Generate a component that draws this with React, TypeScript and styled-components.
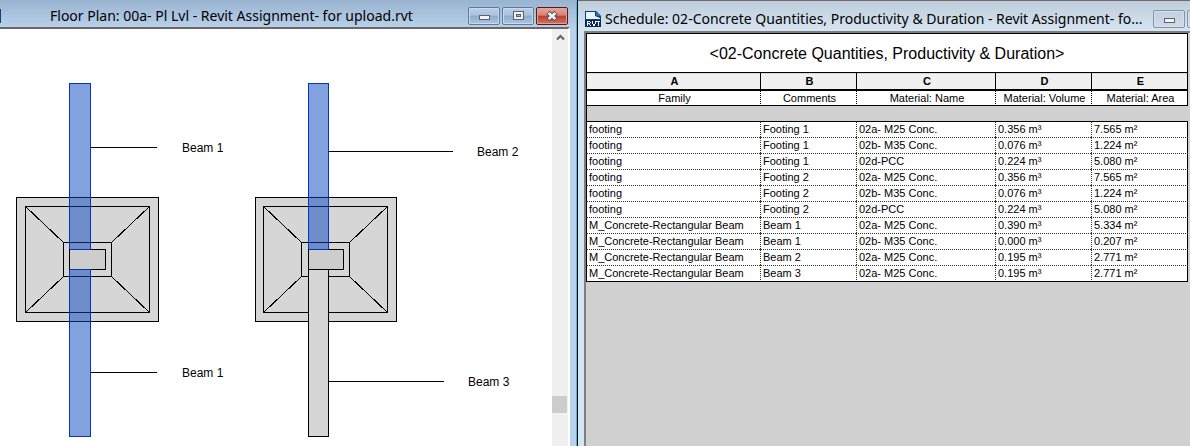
import React from 'react';
import styled, { createGlobalStyle, css } from 'styled-components';

const GlobalStyle = createGlobalStyle`
  *, *::before, *::after { box-sizing: border-box; }
  body { margin: 0; background: #d0d0d0; font-family: "Liberation Sans", Arial, sans-serif; color: #000; }
`;

const Workspace = styled.main`
  display: grid;
  grid-template-columns: minmax(0, 577fr) minmax(0, 613fr);
  min-height: 100vh;
  overflow: hidden;
`;

const PlanWindow = styled.section`
  display: flex;
  flex-direction: column;
  padding-right: 6px;
  border-right: 1px solid #2cc4ee;
  background: linear-gradient(#99b4d1, #b9d1ea 28px, #b9d1ea);
`;

const ScheduleWindow = styled.section`
  display: flex;
  flex-direction: column;
  padding-left: 6px;
  border-left: 1px solid #000;
  border-top: 1px solid #6b6b70;
  background: linear-gradient(#bfcddb, #d7e4f2 30px, #d7e4f2);
`;

const TitleBar = styled.header<{ $kind: 'plan' | 'schedule' }>`
  display: flex;
  align-items: center;
  gap: 4px;
  ${({ $kind }) =>
    $kind === 'plan'
      ? css`height: 27px; padding: 4px 2px 0 0; &::before { content: ""; align-self: center; width: 1px; height: 14px; background: #0a3f8c; margin-right: 45px; }`
      : css`height: 30px; padding: 6px 0 0 1px;`}
`;

const Title = styled.h1`
  flex: 1;
  min-width: 0;
  margin: 0;
  overflow: hidden;
  white-space: nowrap;
  font: 400 14px/22px "Noto Sans", "Open Sans", sans-serif;
`;

const Controls = styled.div<{ $wide?: boolean }>`
  display: flex;
  gap: 2px;
  flex: none;
  width: ${({ $wide }) => ($wide ? '100px' : '37px')};
  overflow: hidden;
`;

const WindowButton = styled.button<{ $tone: 'blue' | 'pale' | 'red' }>`
  display: grid;
  place-items: center;
  flex: none;
  width: 32px;
  height: 18px;
  padding: 0;
  border-radius: 2px;
  ${({ $tone }) =>
    $tone === 'red'
      ? css`border: 1px solid #541b26; background: linear-gradient(#e8a598, #d98374 45%, #b8412a 50%, #d2745f); box-shadow: inset 0 0 0 1px #e6a295;`
      : $tone === 'blue'
        ? css`border: 1px solid #62799b; background: linear-gradient(#b8cfe8, #a9c2de 45%, #8fabca 50%, #abc7e4); box-shadow: inset 0 0 0 1px #c6dbf0;`
        : css`border: 1px solid #8592ab; background: linear-gradient(#c3cfde, #cfdbe9); box-shadow: inset 0 0 0 1px #d5e0ed;`}
`;

const PlanBody = styled.div`
  display: flex;
  flex: 1;
  border-top: 2px solid #6e6769;
  border-right: 2px solid #fff;
  background: #fff;
`;

const Canvas = styled.div`
  flex: 1;
  min-width: 0;
  overflow: hidden;
  background: #fff;
  svg { display: block; }
  text { font: 12px "Liberation Sans", Arial, sans-serif; }
`;

const ScrollBar = styled.div`
  display: flex;
  flex: none;
  flex-direction: column;
  width: 16px;
  background: #f0f0f0;
`;

const ScrollUp = styled.button`
  height: 17px;
  padding: 0;
  border: 0;
  background: transparent;
  svg { display: block; margin: 0 auto; }
`;

const ScrollTrack = styled.div`
  display: flex;
  flex: 1;
  align-items: flex-end;
  padding-bottom: 33px;
`;

const ScrollThumb = styled.div`
  width: 15px;
  height: 17px;
  background: #cdcdcd;
`;

const ScheduleBody = styled.div`
  flex: 1;
  padding-right: 2px;
  border-top: 2px solid #7f7f82;
  border-left: 2px solid #7f7f82;
  background: #d0d0d0;
`;

const Table = styled.table`
  width: 100%;
  table-layout: fixed;
  border-collapse: separate;
  border-spacing: 0;
  font-size: 11px;
  line-height: 13px;
`;

const Caption = styled.caption`
  height: 40px;
  border: 1px solid #000;
  background: #fff;
  font-size: 16px;
  line-height: 39px;
  white-space: nowrap;
`;

const Column = styled.col<{ $width?: number }>`
  width: ${({ $width }) => ($width ? `${$width}px` : 'auto')};
`;

const Letter = styled.th`
  height: 18px;
  padding: 1px 0 0 2px;
  border-left: 1px solid #000;
  border-bottom: 2px solid #000;
  background: #f0f0f0;
  box-shadow: inset 0 1px 0 #d8d8d8;
  &:last-child { border-right: 1px solid #000; }
`;

const Field = styled.th`
  height: 15px;
  padding: 0 0 0 2px;
  border-left: 1px dotted #000;
  border-bottom: 1px solid #000;
  background: #fff;
  font-weight: 400;
  &:first-child { border-left-style: solid; }
  &:last-child { border-right: 1px solid #000; }
`;

const Spacer = styled.td`
  height: 15px;
  padding: 0;
  border-left: 1px solid #000;
`;

const Cell = styled.td`
  height: 16px;
  padding: 1px 0 1px 2px;
  border-left: 1px dotted #333;
  border-top: 1px dotted #333;
  background: #fff;
  white-space: nowrap;
  overflow: hidden;
  &:first-child { border-left: 1px solid #000; }
  &:last-child { border-right: 1px solid #000; }
  tr:first-child > & { border-top: 1px solid #000; }
  tr:last-child > & { border-bottom: 1px solid #000; height: 17px; }
`;

const rows = [
  ['footing', 'Footing 1', '02a- M25 Conc.', '0.356 m³', '7.565 m²'],
  ['footing', 'Footing 1', '02b- M35 Conc.', '0.076 m³', '1.224 m²'],
  ['footing', 'Footing 1', '02d-PCC', '0.224 m³', '5.080 m²'],
  ['footing', 'Footing 2', '02a- M25 Conc.', '0.356 m³', '7.565 m²'],
  ['footing', 'Footing 2', '02b- M35 Conc.', '0.076 m³', '1.224 m²'],
  ['footing', 'Footing 2', '02d-PCC', '0.224 m³', '5.080 m²'],
  ['M_Concrete-Rectangular Beam', 'Beam 1', '02a- M25 Conc.', '0.390 m³', '5.334 m²'],
  ['M_Concrete-Rectangular Beam', 'Beam 1', '02b- M35 Conc.', '0.000 m³', '0.207 m²'],
  ['M_Concrete-Rectangular Beam', 'Beam 2', '02a- M25 Conc.', '0.195 m³', '2.771 m²'],
  ['M_Concrete-Rectangular Beam', 'Beam 3', '02a- M25 Conc.', '0.195 m³', '2.771 m²'],
];

const MinimizeIcon = () => (
  <svg width="12" height="12" aria-hidden="true" shapeRendering="crispEdges">
    <rect x="1" y="5" width="11" height="5" fill="#5b6173" />
    <rect x="2" y="6" width="9" height="3" fill="#f2f2f2" />
  </svg>
);

const RestoreIcon = () => (
  <svg width="12" height="12" aria-hidden="true" shapeRendering="crispEdges">
    <rect x="1" y="1" width="11" height="9" fill="#5b6173" />
    <rect x="2" y="2" width="9" height="7" fill="#f2f2f2" />
    <rect x="4" y="4" width="5" height="3" fill="#5b6173" />
    <rect x="5" y="5" width="3" height="1" fill="#9db7d6" />
  </svg>
);

const CloseIcon = () => (
  <svg width="12" height="12" aria-hidden="true">
    <path d="M2 2.500 L10 9.500 M10 2.500 L2 9.500" stroke="#53505f" strokeWidth="4.6" />
    <path d="M2.500 3 L9.500 9 M9.500 3 L2.500 9" stroke="#f4f4f4" strokeWidth="2.6" />
  </svg>
);

const RvtIcon = () => (
  <svg width="16" height="16" aria-hidden="true">
    <path d="M0 0H11L16 5V16H0Z" fill="#0c3f7d" />
    <path d="M1 1H10V5L15 7V8H1Z" fill="#eaf2fa" />
    <path d="M11 0L16 5H11Z" fill="#2f6db0" />
    <rect y="9" width="16" height="7" fill="#06285a" />
    <g fill="#fff" shapeRendering="crispEdges">
      <path d="M2 10h3v1h-2v1h2v1h-2v2h-1zM5 11h1v1h-1zM4 13h1v1h-1zM5 14h1v1h-1z" />
      <path d="M7 10h1v3h-1zM10 10h1v3h-1zM8 13h2v2h-2z" />
      <path d="M11 10h4v1h-1v4h-1v-4h-2z" />
    </g>
  </svg>
);

const Footing = ({ x, inner, right }: { x: number; inner: number; right: number }) => (
  <g stroke="#000" fill="#d6d6d6">
    <rect x={x} y="168.500" width={right - x} height="124" />
    <rect x={inner} y="177.500" width="124" height="106" />
    <path d={`M${inner} 177.500l38 36M${inner + 124} 177.500l-38 36M${inner} 283.500l38 -36M${inner + 124} 283.500l-38 -36`} />
    <rect x={inner + 38} y="213.500" width="48" height="34" />
  </g>
);

const Drawing = () => (
  <svg width="552" height="417" role="img" aria-label="Floor plan of two footings and three beams" shapeRendering="crispEdges">
    <Footing x={16.5} inner={25.5} right={158.5} />
    <Footing x={255.5} inner={263.5} right={396.5} />
    <g fill="#0a43c0" fillOpacity="0.5" stroke="#0038b8">
      <rect x="69.500" y="54.500" width="21" height="166" />
      <rect x="69.500" y="240.500" width="21" height="167" />
      <rect x="308.500" y="54.500" width="20" height="166" />
    </g>
    <g fill="#cdcdcd" stroke="#000">
      <rect x="69.500" y="220.500" width="36" height="20" />
      <rect x="308.500" y="220.500" width="35" height="20" />
      <rect x="308.500" y="240.500" width="20" height="167" fill="#d6d6d6" />
      <path d="M91 118.500H157M91 343.500H157M329 122.500H453M329 352.500H444" />
    </g>
    <path d="M70 220.500H91M70 240.500H91M309 220.500H329" stroke="#0038b8" />
    <text x="182" y="123">Beam 1</text>
    <text x="182" y="348">Beam 1</text>
    <text x="477" y="127">Beam 2</text>
    <text x="468" y="357">Beam 3</text>
  </svg>
);

export default function App() {
  return (
    <>
      <GlobalStyle />
      <Workspace>
        <PlanWindow>
          <TitleBar $kind="plan">
            <Title>Floor Plan: 00a- Pl Lvl - Revit Assignment- for upload.rvt</Title>
            <Controls $wide>
              <WindowButton $tone="blue" aria-label="Minimize"><MinimizeIcon /></WindowButton>
              <WindowButton $tone="blue" aria-label="Restore"><RestoreIcon /></WindowButton>
              <WindowButton $tone="red" aria-label="Close"><CloseIcon /></WindowButton>
            </Controls>
          </TitleBar>
          <PlanBody>
            <Canvas><Drawing /></Canvas>
            <ScrollBar>
              <ScrollUp aria-label="Scroll up">
                <svg width="9" height="7"><path d="M1 5.500L4.500 2L8 5.500" fill="none" stroke="#606060" strokeWidth="2" /></svg>
              </ScrollUp>
              <ScrollTrack><ScrollThumb /></ScrollTrack>
            </ScrollBar>
          </PlanBody>
        </PlanWindow>
        <ScheduleWindow>
          <TitleBar $kind="schedule">
            <RvtIcon />
            <Title>Schedule: 02-Concrete Quantities, Productivity &amp; Duration - Revit Assignment- fo...</Title>
            <Controls>
              <WindowButton $tone="pale" aria-label="Minimize"><MinimizeIcon /></WindowButton>
              <WindowButton $tone="pale" aria-label="Restore" />
            </Controls>
          </TitleBar>
          <ScheduleBody>
            <Table>
              <Caption>&lt;02-Concrete Quantities, Productivity &amp; Duration&gt;</Caption>
              <colgroup>
                <Column /><Column $width={96} /><Column $width={139} /><Column $width={96} /><Column $width={97} />
              </colgroup>
              <thead>
                <tr>{['A', 'B', 'C', 'D', 'E'].map((l) => <Letter key={l}>{l}</Letter>)}</tr>
                <tr>
                  {['Family', 'Comments', 'Material: Name', 'Material: Volume', 'Material: Area'].map((f) => (
                    <Field key={f} scope="col">{f}</Field>
                  ))}
                </tr>
                <tr><Spacer colSpan={5} /></tr>
              </thead>
              <tbody>
                {rows.map((row, i) => (
                  <tr key={i}>{row.map((value, j) => <Cell key={j}>{value}</Cell>)}</tr>
                ))}
              </tbody>
            </Table>
          </ScheduleBody>
        </ScheduleWindow>
      </Workspace>
    </>
  );
}
